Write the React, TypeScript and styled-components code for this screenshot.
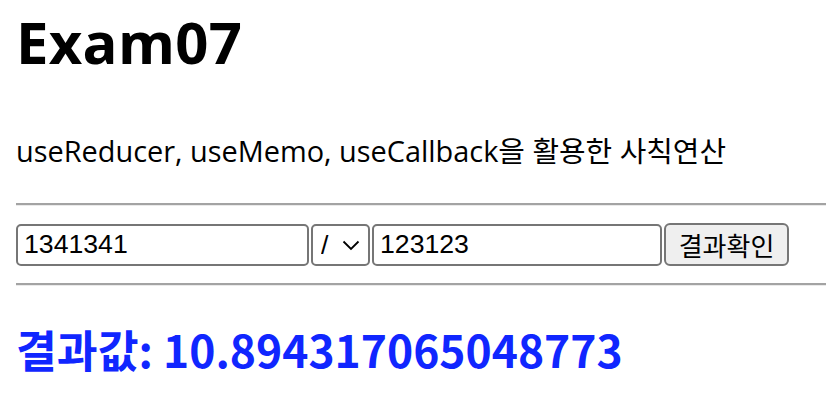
import React, { useState } from "react";
import styled, { createGlobalStyle } from "styled-components";

const Global = createGlobalStyle`
  html, body { margin: 0; padding: 0; background: #ffffff; }
  body { font-family: "Noto Sans CJK KR", "Noto Sans", sans-serif; color: #000; }
`;

const Page = styled.div`
  display: flex;
  flex-direction: column;
  padding: 0 0 0 16px;
  width: 860px;
`;

const Title = styled.h1`
  margin: 2px 0 0;
  font-family: "Open Sans", "Noto Sans CJK KR", sans-serif;
  font-size: 58px;
  font-weight: 700;
  line-height: 80px;
  letter-spacing: 0.3px;
`;

const Subtitle = styled.p`
  margin: 49px 0 0;
  font-family: "Open Sans", "Noto Sans CJK KR", sans-serif;
  font-size: 28.9px;
  font-weight: 400;
  line-height: 40px;
`;

const Rule = styled.hr<{ $top: number }>`
  margin: ${(p) => p.$top}px 0 0;
  height: 0;
  border: none;
  border-top: 2px solid #a3a3a3;
  border-bottom: 1px solid #eaeaea;
`;

const Row = styled.div`
  display: flex;
  align-items: center;
  gap: 2px;
  margin-top: 17px;
  height: 43px;
`;

const NumInput = styled.input<{ $w: number }>`
  box-sizing: border-box;
  width: ${(p) => p.$w}px;
  height: 42px;
  margin: 0;
  padding: 2px 6px;
  border: 2px solid #767676;
  border-radius: 5px;
  background: #fff;
  font-family: "Liberation Sans", Arial, sans-serif;
  font-size: 26.67px;
  color: #000;
  outline: none;
`;

const SelectWrap = styled.div`
  position: relative;
  width: 59px;
  height: 42px;
`;

const Select = styled.select`
  box-sizing: border-box;
  appearance: none;
  -webkit-appearance: none;
  width: 100%;
  height: 100%;
  margin: 0;
  padding: 0 0 0 8px;
  border: 2px solid #767676;
  border-radius: 5px;
  background: #fff;
  font-family: "Liberation Sans", Arial, sans-serif;
  font-size: 26.67px;
  color: #000;
  outline: none;
`;

const Chevron = styled.svg`
  position: absolute;
  right: 10px;
  top: 16px;
  width: 18px;
  height: 11px;
  pointer-events: none;
`;

const Button = styled.button`
  box-sizing: border-box;
  width: 125px;
  height: 43px;
  margin: 0;
  padding: 0 10px;
  border: 2px solid #767676;
  border-radius: 6px;
  background: #efefef;
  font-family: "Noto Sans CJK KR", sans-serif;
  font-size: 26px;
  line-height: 1;
  color: #000;
`;

const Result = styled.h2`
  margin: 33px 0 0;
  font-family: "Noto Sans CJK KR", "Open Sans", sans-serif;
  font-size: 44.4px;
  font-weight: 700;
  line-height: 60px;
  color: #1026ff;
`;

export default function App() {
  const [a, setA] = useState("1341341");
  const [b, setB] = useState("123123");
  const [op, setOp] = useState("/");
  return (
    <>
      <Global />
      <Page>
        <Title>Exam07</Title>
        <Subtitle>useReducer, useMemo, useCallback을 활용한 사칙연산</Subtitle>
        <Rule $top={32} />
        <Row>
          <NumInput $w={293} value={a} onChange={(e) => setA(e.target.value)} />
          <SelectWrap>
            <Select value={op} onChange={(e) => setOp(e.target.value)}>
              <option value="+">+</option>
              <option value="-">-</option>
              <option value="*">*</option>
              <option value="/">/</option>
            </Select>
            <Chevron viewBox="0 0 18 11">
              <path d="M1.5 1.5 L9 9 L16.5 1.5" fill="none" stroke="#000" strokeWidth="1.8" />
            </Chevron>
          </SelectWrap>
          <NumInput $w={290} value={b} onChange={(e) => setB(e.target.value)} />
          <Button>결과확인</Button>
        </Row>
        <Rule $top={17} />
        <Result>결과값: 10.894317065048773</Result>
      </Page>
    </>
  );
}
